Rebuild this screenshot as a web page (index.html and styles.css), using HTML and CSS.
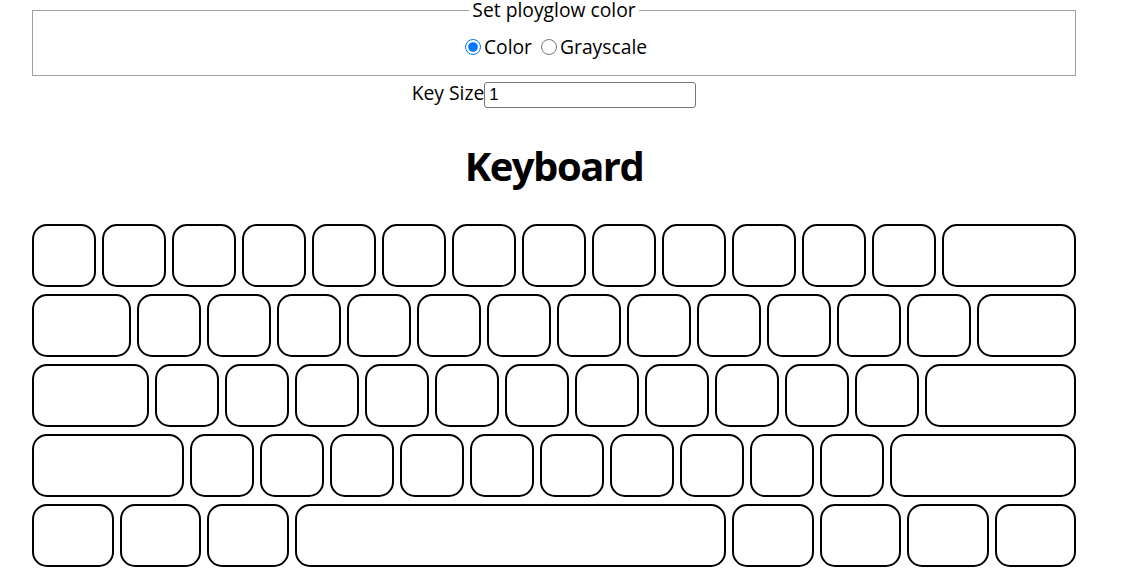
FILE: index.html
```html
<!DOCTYPE html>
<html lang="en">
<head>
<meta charset="utf-8">
<title>Keyboard</title>
<link rel="stylesheet" href="styles.css">
</head>
<body>
<main class="page">
  <fieldset class="color-set">
    <legend>Set ployglow color</legend>
    <div class="radios"><input type="radio" id="mode-color" name="mode" checked><label for="mode-color">Color</label> <input type="radio" id="mode-gray" name="mode"><label for="mode-gray">Grayscale</label></div>
  </fieldset>
  <div class="size-row"><label for="key-size">Key Size</label><input id="key-size" type="text" value="1"></div>
  <h1>Keyboard</h1>
  <div class="keyboard">
    <div class="row">
      <div class="key"></div><div class="key"></div><div class="key"></div><div class="key"></div><div class="key"></div><div class="key"></div><div class="key"></div><div class="key"></div><div class="key"></div><div class="key"></div><div class="key"></div><div class="key"></div><div class="key"></div><div class="key u2"></div>
    </div>
    <div class="row">
      <div class="key u15"></div><div class="key"></div><div class="key"></div><div class="key"></div><div class="key"></div><div class="key"></div><div class="key"></div><div class="key"></div><div class="key"></div><div class="key"></div><div class="key"></div><div class="key"></div><div class="key"></div><div class="key u15"></div>
    </div>
    <div class="row">
      <div class="key u175"></div><div class="key"></div><div class="key"></div><div class="key"></div><div class="key"></div><div class="key"></div><div class="key"></div><div class="key"></div><div class="key"></div><div class="key"></div><div class="key"></div><div class="key"></div><div class="key u225"></div>
    </div>
    <div class="row">
      <div class="key u225"></div><div class="key"></div><div class="key"></div><div class="key"></div><div class="key"></div><div class="key"></div><div class="key"></div><div class="key"></div><div class="key"></div><div class="key"></div><div class="key"></div><div class="key u275"></div>
    </div>
    <div class="row">
      <div class="key u125"></div><div class="key u125"></div><div class="key u125"></div><div class="key u625"></div><div class="key u125"></div><div class="key u125"></div><div class="key u125"></div><div class="key u125"></div>
    </div>
  </div>
</main>
</body>
</html>
```
FILE: styles.css
```css
html, body {
  margin: 0;
  background: #fff;
}

body {
  font-family: "Open Sans", "Noto Sans", sans-serif;
  font-size: 19.3px;
  color: #000;
}

.page {
  width: 1044px;
  margin-left: 32px;
  text-align: center;
}

.color-set {
  margin: 0;
  padding: 14px 10px 15px;
  border: 1px solid #a0a0a0;
  min-width: 0;
}

.color-set legend {
  margin: 0 auto;
  padding: 0 3px;
  line-height: 20px;
}

.radios {
  height: 26px;
  line-height: 26px;
}

.radios input {
  width: 16px;
  height: 16px;
  margin: 0 3px 0 4px;
  vertical-align: -1px;
}

.size-row {
  display: flex;
  justify-content: center;
  align-items: flex-start;
  margin-top: 6px;
  height: 26px;
}

.size-row label {
  line-height: 22px;
}

.size-row input {
  box-sizing: border-box;
  width: 212px;
  height: 26px;
  margin: 0;
  padding: 1px 4px;
  border: 1px solid #767676;
  border-radius: 3px;
  font: 16.7px "Liberation Sans", sans-serif;
  color: #000;
}

h1 {
  margin: 34px 0 34px;
  font-size: 40px;
  line-height: 48px;
  font-weight: 700;
  letter-spacing: -1.5px;
}

.keyboard {
  display: flex;
  flex-direction: column;
  gap: 7px;
}

.row {
  display: flex;
  gap: 6px;
}

.key {
  --u: 1;
  flex: none;
  box-sizing: border-box;
  width: calc(70px * var(--u) - 6px);
  height: 63px;
  border: 2px solid #000;
  border-radius: 15px;
  background: #fff;
}

.u125 { --u: 1.25; }
.u15 { --u: 1.5; }
.u175 { --u: 1.75; }
.u2 { --u: 2; }
.u225 { --u: 2.25; }
.u275 { --u: 2.75; }
.u625 { --u: 6.25; }
```
